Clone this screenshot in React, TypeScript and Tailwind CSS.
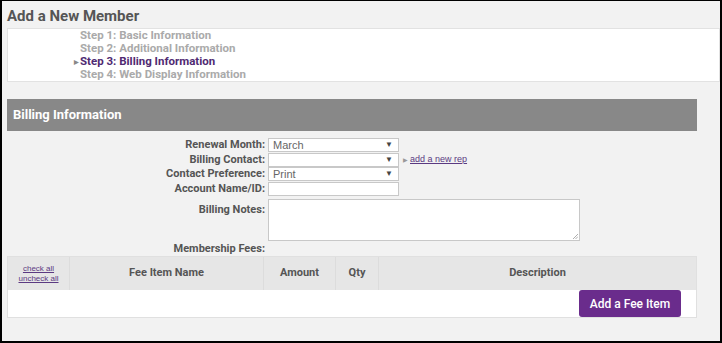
const steps = [
  { label: "Step 1: Basic Information", active: false },
  { label: "Step 2: Additional Information", active: false },
  { label: "Step 3: Billing Information", active: true },
  { label: "Step 4: Web Display Information", active: false },
];

function Select({ value }: { value: string }) {
  return (
    <div className="flex h-[14px] w-[131px] items-center justify-between border border-[#c8c8c8] bg-white pl-[4px] pr-[5px] font-['Liberation_Sans',Arial,sans-serif] text-[11px] text-[#666]">
      <span className="leading-none">{value}</span>
      <span className="text-[8px] leading-none text-[#444]">▼</span>
    </div>
  );
}

function Row({ label, children }: { label: string; children: React.ReactNode }) {
  return (
    <div className="flex h-[14.5px] items-center">
      <div className="w-[260px] pr-[2px] text-right text-[11px] font-bold leading-[14px] text-[#555]">{label}</div>
      <div className="pl-[1px]">{children}</div>
    </div>
  );
}

export default function App() {
  return (
    <div className="h-[343px] w-[722px] overflow-hidden border-b-2 border-l-2 border-r-2 border-t border-black bg-[#f2f2f2] font-['Roboto',sans-serif]">
      <div className="pl-[5px]">
        <h1 className="pt-[5px] text-[15px] font-bold leading-[20px] text-[#555]">Add a New Member</h1>
        <div className="mt-[2px] h-[54px] border border-[#e2e2e2] bg-white pl-[66px]">
          {steps.map((s) => (
            <div key={s.label} className="flex items-center text-[11.5px] font-bold leading-[13px]">
              <span className="w-[6px] text-[6px] text-[#888]">{s.active ? "▶" : ""}</span>
              <span className={s.active ? "text-[#4f2a72]" : "text-[#aaaaaa]"}>{s.label}</span>
            </div>
          ))}
        </div>

        <div className="mt-[17px] flex h-[32px] w-[690px] items-center bg-[#888888] pl-[6px] text-[13px] font-bold text-white">
          Billing Information
        </div>

        <div className="mt-[7px]">
          <Row label="Renewal Month:">
            <Select value="March" />
          </Row>
          <Row label="Billing Contact:">
            <div className="flex items-center">
              <Select value="" />
              <span className="ml-[4px] text-[6px] text-[#999]">▶</span>
              <a className="ml-[2px] font-['Liberation_Sans',Arial,sans-serif] text-[9px] text-[#5b3a82] underline">add a new rep</a>
            </div>
          </Row>
          <Row label="Contact Preference:">
            <Select value="Print" />
          </Row>
          <Row label="Account Name/ID:">
            <div className="h-[14px] w-[131px] border border-[#c8c8c8] bg-white" />
          </Row>
          <div className="mt-[3px] flex items-start">
            <div className="w-[260px] pr-[2px] pt-[4px] text-right text-[11px] font-bold leading-[14px] text-[#555]">Billing Notes:</div>
            <div className="relative ml-[1px] h-[42px] w-[312px] border border-[#c8c8c8] bg-white">
              <svg className="absolute bottom-[1px] right-[1px]" width="6" height="6" viewBox="0 0 6 6">
                <path d="M1 6 L6 1 M3.5 6 L6 3.5" stroke="#999" strokeWidth="0.8" />
              </svg>
            </div>
          </div>
          <div className="mt-[2px] w-[260px] pr-[2px] text-right text-[11px] font-bold leading-[12px] text-[#555]">Membership Fees:</div>
        </div>

        <div className="mt-[1px] w-[690px] border border-[#e0e0e0] bg-white">
          <div className="flex h-[33px] items-center bg-[#e6e6e6] text-[11px] font-bold text-[#555]">
            <div className="flex h-full w-[62px] flex-col items-center justify-center border-r border-[#dcdcdc] font-['Liberation_Sans',Arial,sans-serif] text-[8px] font-normal leading-[10px] text-[#5b3a82]">
              <a className="underline">check all</a>
              <a className="underline">uncheck all</a>
            </div>
            <div className="flex h-full w-[194px] items-center justify-center border-r border-[#dcdcdc]">Fee Item Name</div>
            <div className="flex h-full w-[72px] items-center justify-center border-r border-[#dcdcdc]">Amount</div>
            <div className="flex h-full w-[43px] items-center justify-center border-r border-[#dcdcdc]">Qty</div>
            <div className="flex h-full flex-1 items-center justify-center">Description</div>
          </div>
          <div className="flex h-[27px] justify-end pr-[15px]">
            <button className="h-[27px] w-[102px] rounded-[3px] bg-[#6a2c8c] text-[12px] font-medium text-white">
              Add a Fee Item
            </button>
          </div>
        </div>
      </div>
    </div>
  );
}
